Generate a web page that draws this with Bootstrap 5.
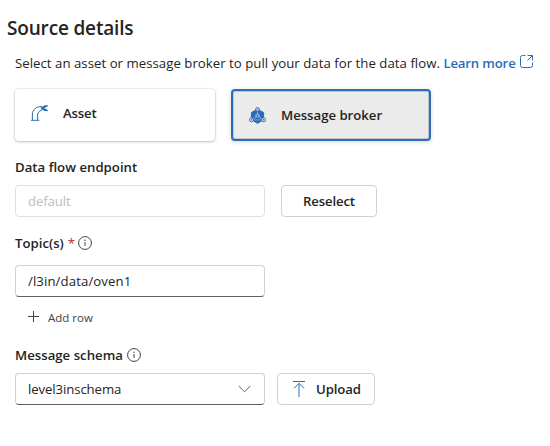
<!DOCTYPE html>
<html lang="en">
<head>
<meta charset="utf-8">
<meta name="viewport" content="width=device-width, initial-scale=1">
<title>Source details</title>
<link href="https://cdn.jsdelivr.net/npm/bootstrap@5.3.0/dist/css/bootstrap.min.css" rel="stylesheet">
<style>
body{font-family:"Segoe UI","Open Sans","Noto Sans",sans-serif;font-size:13.2px;line-height:20px;color:#242424;background:#fff;overflow:hidden}
.panel{padding:14px 0 0 15px;width:550px;height:446px}
.title{font-size:19px;line-height:28px;font-weight:600;margin:0 0 0 -8px;letter-spacing:-.17px}
.intro{margin-top:11px;height:20px;white-space:nowrap;letter-spacing:.035px}
.learn{color:#2b6cb8;letter-spacing:-.17px}
.learn svg{margin-left:4px;vertical-align:0}
.tile{height:52px;border-radius:4px;border:0;background:#fff;font-weight:600;letter-spacing:-.15px;color:#242424}
.tile-asset{width:200px;box-shadow:0 0 2px rgba(0,0,0,.2),0 1px 3px rgba(0,0,0,.2);padding:0 0 4px 16px}
.tile-broker{width:200px;border:2px solid #2a6ebb;background:#ebebeb;box-shadow:inset 0 0 0 1px #c4c4c4,0 1px 4px rgba(0,0,0,.16);padding-left:16px;letter-spacing:-.02px}
.field-label{font-weight:600;height:20px;letter-spacing:.01px}
.field{width:250px;height:32px;border:1px solid #d1d1d1;border-radius:4px;padding:0 12px;font-size:13.2px;line-height:20px;color:#242424;background:#fff;letter-spacing:-.1px}
.field:disabled{background:#fff;border-color:#e0e0e0;color:#bdbdbd}
.field-active{border-bottom-color:#616161}
.topic{letter-spacing:.1px}
.action{height:32px;border:1px solid #d1d1d1;border-radius:4px;background:#fff;color:#242424;font-size:13.2px;font-weight:600;line-height:20px;padding:0;letter-spacing:-.15px}
.reselect{width:96px}
.upload{width:98px}
.add-row{height:20px;font-size:11.5px;color:#424242;padding-left:13px}
.add-row span{padding-top:1px}
.star{color:#bc2f32;font-weight:400}
</style>
</head>
<body>
<main class="panel d-flex flex-column align-items-start">
  <h1 class="title">Source details</h1>
  <p class="intro mb-0"><span>Select an asset or message broker to pull your data for the data flow.</span> <a class="learn fw-semibold text-decoration-none" href="#"><span>Learn more</span><svg width="13" height="13" viewBox="0 0 13 13" fill="none" stroke="#2b6cb8" stroke-linecap="round"><path d="M5 .5H2.5a2 2 0 0 0-2 2v8a2 2 0 0 0 2 2h8a2 2 0 0 0 2-2V8M8 .5h4.5V5M12.2.8 7.7 5.3"/></svg></a></p>
  <div class="d-flex gap-3 mt-3">
    <button class="tile tile-asset d-flex align-items-center"><svg width="17" height="16" viewBox="0 0 17 16" fill="none" stroke="#2b6cb8"><path d="M0 15.3h8.3M1.4 15V7.6Q3 3.9 5.5 2.5q2-.8 4.5-.8M6.6 15V9Q7.5 6.2 11.3 4.6"/><path d="m9.3 1.3 3 1.8 3.7-2.2h-2.2L10.8 3M10 4.2l2.3-1.1L16 5.3h-2.4l-2-1.3" stroke-width="1.3"/></svg><span style="margin-left:15px">Asset</span></button>
    <button class="tile tile-broker d-flex align-items-center"><svg width="17" height="17" viewBox="0 0 17 17"><path d="m8.5 2.2 6.1 3.3v7.1l-6.1 3.8-6.1-3.8V5.5z" fill="#2b6cb8" stroke="#2b6cb8" stroke-linejoin="round"/><g fill="none" stroke="#86b0de" stroke-width=".7"><path d="M8.5 4v4M7.5 10 4 12.4M9.5 10l3.5 2.4M5.4 11.2l2.2-5M11.6 11.2l-2.2-5M5.2 12.9h6.6"/></g><g fill="#ebebeb" stroke="#2b6cb8" stroke-width=".9"><circle cx="8.5" cy="2.3" r="1.9"/><circle cx="2.4" cy="12.8" r="2"/><circle cx="14.6" cy="12.8" r="2"/></g><g fill="#2b6cb8"><circle cx="8.5" cy="2.3" r=".8"/><circle cx="2.4" cy="12.8" r=".8"/><circle cx="14.6" cy="12.8" r=".8"/><circle cx="8.5" cy="9" r="1.3" stroke="#a9cbed" stroke-width=".8"/></g></svg><span style="margin-left:15px">Message broker</span></button>
  </div>
  <label class="field-label" style="margin-top:16px">Data flow endpoint</label>
  <div class="d-flex gap-3 mt-2">
    <input class="field" value="default" disabled>
    <button class="action reselect">Reselect</button>
  </div>
  <label class="field-label d-flex align-items-center mt-3">Topic(s)<span class="star ms-1">*</span><svg style="margin-left:3px" width="14" height="14" viewBox="0 0 14 14"><circle cx="7" cy="7" r="6.4" fill="none" stroke="#424242"/><path d="M7 6v4" stroke="#424242"/><circle cx="7" cy="4.3" r=".75" fill="#424242"/></svg></label>
  <input class="field field-active topic" value="/l3in/data/oven1" style="margin-top:12px">
  <div class="add-row d-flex align-items-center" style="margin-top:10px"><svg width="12" height="12" viewBox="0 0 12 12" stroke="#424242"><path d="M0 5.5h11M5.5 0v11"/></svg><span class="ms-2">Add row</span></div>
  <label class="field-label d-flex align-items-center" style="margin-top:18px">Message schema<svg class="ms-1" width="14" height="14" viewBox="0 0 14 14"><circle cx="7" cy="7" r="6.4" fill="none" stroke="#424242"/><path d="M7 6v4" stroke="#424242"/><circle cx="7" cy="4.3" r=".75" fill="#424242"/></svg></label>
  <div class="d-flex mt-2" style="gap:12px">
    <button class="field field-active d-flex align-items-center justify-content-between"><span>level3inschema</span><svg style="margin-right:1px" width="13" height="8" viewBox="0 0 13 8" fill="none" stroke="#616161"><path d="m.7 1 5.8 5.8L12.3 1"/></svg></button>
    <button class="action upload d-flex align-items-center"><svg style="margin-left:15px" width="12" height="16" viewBox="0 0 12 16" fill="none" stroke="#2b6cb8"><path d="M0 .5h12M6 16V2.5M1 7.3l5-5 5 5"/></svg><span style="margin-left:11px">Upload</span></button>
  </div>
</main>
<script src="https://cdn.jsdelivr.net/npm/bootstrap@5.3.0/dist/js/bootstrap.bundle.min.js"></script>
</body>
</html>
